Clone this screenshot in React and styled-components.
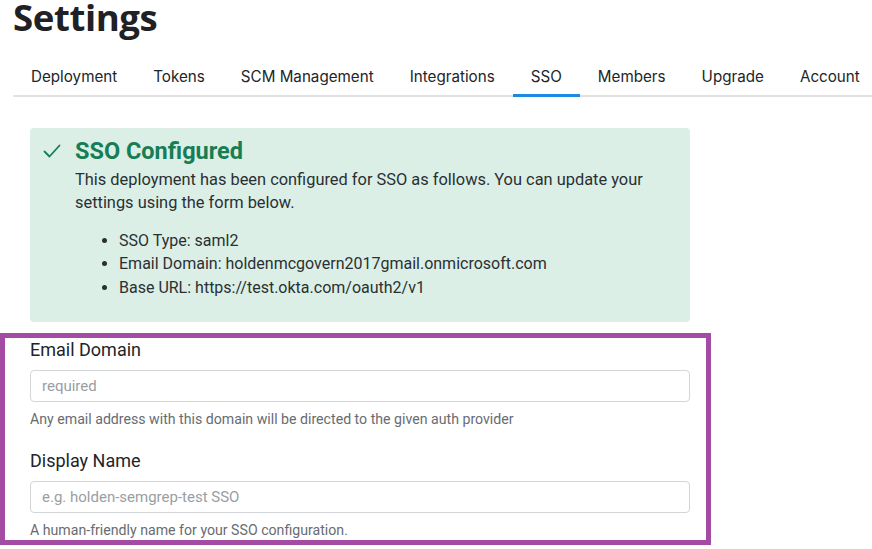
import React from "react";
import styled, { createGlobalStyle } from "styled-components";

const Global = createGlobalStyle`
  html, body { margin: 0; padding: 0; background: #fff; }
  body { font-family: Roboto, "Liberation Sans", sans-serif; color: #212529; }
  * { box-sizing: border-box; }
`;

const Page = styled.div`
  width: 872px;
  height: 549px;
  overflow: hidden;
`;

const Header = styled.div`
  padding-left: 13px;
`;

const Title = styled.h1`
  margin: -3px 0 0;
  font-family: "Open Sans", "Noto Sans", sans-serif;
  font-weight: 700;
  font-size: 36.6px;
  line-height: 40px;
  color: #1f2124;
  letter-spacing: -0.4px;
`;

const TabBar = styled.nav`
  display: flex;
  margin-top: 22px;
  border-bottom: 2px solid #dfe1e5;
`;

const Tab = styled.a`
  display: block;
  padding: 8px 18px 7px;
  margin-bottom: -2px;
  font-family: Inter, "Noto Sans", sans-serif;
  font-size: 15.2px;
  line-height: 20px;
  color: #212529;
  border-bottom: 3px solid ${(p) => (p.$active ? "#1e88e5" : "transparent")};
  cursor: pointer;
  white-space: nowrap;
`;

const Content = styled.div`
  padding-left: 30px;
  margin-top: 31px;
`;

const SuccessCard = styled.div`
  width: 660px;
  background: #dbefe6;
  border-radius: 4px;
  padding: 9px 16px 1px 13px;
  display: flex;
  gap: 14px;
`;

const CheckIcon = styled.svg`
  flex: none;
  width: 18px;
  height: 18px;
  margin-top: 5px;
`;

const CardBody = styled.div`
  flex: 1;
`;

const CardTitle = styled.h4`
  margin: 0;
  font-size: 23.5px;
  font-weight: 700;
  line-height: 28px;
  color: #177d55;
`;

const CardText = styled.p`
  margin: 2.5px 0 15px;
  font-size: 16.4px;
  line-height: 23px;
  color: #2b2f33;
`;

const List = styled.ul`
  margin: 0 0 22px;
  padding-left: 44px;
  font-size: 16px;
  line-height: 23.5px;
  color: #2b2f33;
`;

const Highlight = styled.section`
  width: 711px;
  margin-top: 11px;
  border: 5px solid #a44ba3;
  padding: 0 16px 0 25px;
`;

const Field = styled.div`
  & + & {
    margin-top: 20px;
  }
`;

const Label = styled.label`
  display: block;
  font-size: 18px;
  line-height: 24px;
  color: #212529;
`;

const Input = styled.input`
  display: block;
  width: 660px;
  height: 32px;
  margin-top: 8px;
  padding: 0 11px;
  border: 1px solid #d3d6d9;
  border-radius: 4px;
  font-family: Roboto, "Liberation Sans", sans-serif;
  font-size: 15px;
  color: #212529;
  background: #fff;
  outline: none;
  &::placeholder {
    color: #9a9ea3;
  }
`;

const Help = styled.div`
  margin-top: 7px;
  font-size: 14.15px;
  line-height: 20px;
  color: #676c71;
`;

const tabs = [
  "Deployment",
  "Tokens",
  "SCM Management",
  "Integrations",
  "SSO",
  "Members",
  "Upgrade",
  "Account",
];

export default function App() {
  return (
    <Page>
      <Global />
      <Header>
        <Title>Settings</Title>
        <TabBar>
          {tabs.map((t) => (
            <Tab key={t} $active={t === "SSO"}>
              {t}
            </Tab>
          ))}
        </TabBar>
      </Header>
      <Content>
        <SuccessCard>
          <CheckIcon viewBox="0 0 18 18" fill="none">
            <path
              d="M1.5 9.5 L6.5 14.5 L16.5 3.5"
              stroke="#177d55"
              strokeWidth="1.8"
              strokeLinecap="round"
              strokeLinejoin="round"
            />
          </CheckIcon>
          <CardBody>
            <CardTitle>SSO Configured</CardTitle>
            <CardText>
              This deployment has been configured for SSO as follows. You can
              update your settings using the form below.
            </CardText>
            <List>
              <li>SSO Type: saml2</li>
              <li>Email Domain: holdenmcgovern2017gmail.onmicrosoft.com</li>
              <li>Base URL: https://test.okta.com/oauth2/v1</li>
            </List>
          </CardBody>
        </SuccessCard>
      </Content>
      <Highlight>
        <Field>
          <Label>Email Domain</Label>
          <Input placeholder="required" />
          <Help>
            Any email address with this domain will be directed to the given
            auth provider
          </Help>
        </Field>
        <Field>
          <Label>Display Name</Label>
          <Input placeholder="e.g. holden-semgrep-test SSO" />
          <Help>A human-friendly name for your SSO configuration.</Help>
        </Field>
      </Highlight>
    </Page>
  );
}
